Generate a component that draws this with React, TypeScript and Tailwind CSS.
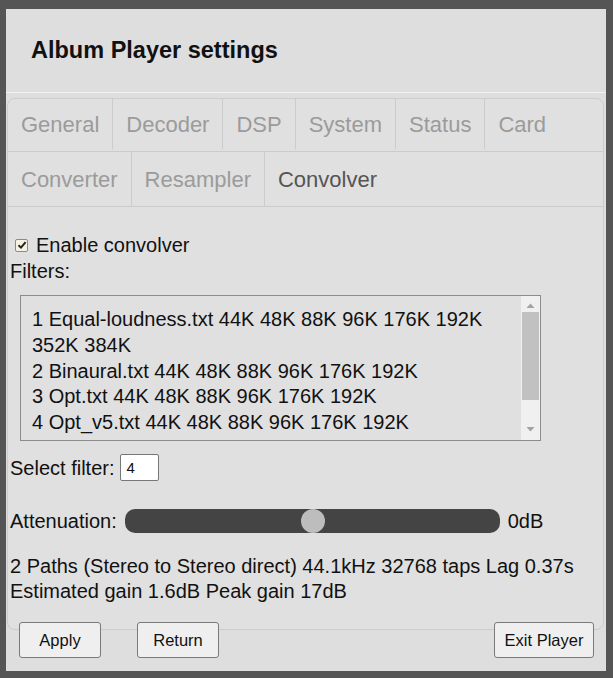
import React, { useState } from 'react'

const rowOne = ['General', 'Decoder', 'DSP', 'System', 'Status', 'Card']
const rowTwo = ['Converter', 'Resampler', 'Convolver']

const filters = [
    '1 Equal-loudness.txt 44K 48K 88K 96K 176K 192K 352K 384K',
    '2 Binaural.txt 44K 48K 88K 96K 176K 192K',
    '3 Opt.txt 44K 48K 88K 96K 176K 192K',
    '4 Opt_v5.txt 44K 48K 88K 96K 176K 192K',
]

const TabRow = ({ tabs, active, tall }: { tabs: string[]; active: string; tall?: boolean }) => (
    <div className={`flex border-b border-[#cbcbcb] ${tall ? 'h-[55px]' : 'h-[53px] pb-[2px]'}`}>
        {tabs.map((t, i) => (
            <div
                key={t}
                className={`flex items-center px-[13px] text-[22px] ${i < tabs.length - 1 ? 'border-r border-[#cbcbcb]' : ''} ${t === active ? 'text-[#555]' : 'text-[#9b9b9b]'}`}
            >
                {t}
            </div>
        ))}
    </div>
)

const Button = ({ label, className }: { label: string; className?: string }) => (
    <button className={`h-[36px] rounded-[3px] border border-[#7a7a7a] bg-[#efefef] text-[16.5px] text-[#111] ${className}`}>
        {label}
    </button>
)

export default function App() {
    const [enabled, setEnabled] = useState(true)
    const [filter, setFilter] = useState('4')

    return (
        <div className="min-h-screen bg-[#555555] pt-[9px] pl-[6px] pr-[7px] pb-[7px] font-['Liberation_Sans',Arial,sans-serif] text-[#111]">
            <div className="flex h-[662px] flex-col bg-[#dedede]">
                {/* Header */}
                <div className="flex h-[84px] items-center border-b border-[#f2f2f2] pl-[25px]">
                    <h1 className="text-[23.5px] font-bold text-[#111]">Album Player settings</h1>
                </div>

                {/* Tab card */}
                <div className="mt-[5px] ml-[1px] mr-[2px] rounded-[8px] border border-[#cccccc] bg-[#e0e0e0]">
                    <TabRow tabs={rowOne} active="Convolver" />
                    <TabRow tabs={rowTwo} active="Convolver" tall />

                    <div className="pt-[25px] pb-[25px] pl-[2px] text-[20px]">
                        <label className="flex h-[26px] items-center" onClick={() => setEnabled(!enabled)}>
                            <span className="ml-[5px] mr-[8px] flex h-[13px] w-[13px] items-center justify-center rounded-[2px] border border-[#8a8a8a] bg-[#f6f1e1]">
                                {enabled && (
                                    <svg width="10" height="10" viewBox="0 0 10 10">
                                        <path d="M1.5 5.2 L4 7.6 L8.6 2.2" fill="none" stroke="#222" strokeWidth="2" />
                                    </svg>
                                )}
                            </span>
                            Enable convolver
                        </label>
                        <div className="flex h-[26px] items-center">Filters:</div>

                        {/* Filter list */}
                        <div className="mt-[11px] ml-[10px] flex h-[146px] w-[521px] overflow-hidden border border-[#8c8c8c] bg-[#e0e0e0]">
                            <div className="flex-1 overflow-hidden pt-[11px] pl-[11px] pr-[8px] leading-[25.75px]">
                                {filters.map((f) => (
                                    <div key={f}>{f}</div>
                                ))}
                            </div>
                            <div className="flex w-[19px] flex-col items-center bg-[#f0f0f0]">
                                <svg width="9" height="16" viewBox="0 0 9 16" className="shrink-0">
                                    <path d="M0.5 12 L4.5 7.5 L8.5 12 Z" fill="#a3a3a3" />
                                </svg>
                                <div className="w-[17px] flex-1 pb-[22px]">
                                    <div className="h-full bg-[#c1c1c1]" />
                                </div>
                                <svg width="9" height="16" viewBox="0 0 9 16" className="mb-[2px] shrink-0">
                                    <path d="M0.5 5 L4.5 9.5 L8.5 5 Z" fill="#a3a3a3" />
                                </svg>
                            </div>
                        </div>

                        <div className="mt-[13px] flex h-[27px] items-center">
                            <span>Select filter:</span>
                            <input
                                value={filter}
                                onChange={(e) => setFilter(e.target.value)}
                                className="ml-[6px] h-[27px] w-[39px] rounded-[2px] border border-[#777] bg-white pl-[5px] text-[15px] text-[#111] outline-none"
                            />
                        </div>

                        <div className="mt-[28px] flex h-[24px] items-center">
                            <span>Attenuation:</span>
                            <div className="relative ml-[8px] h-[24px] w-[375px] rounded-[10px] bg-[#444444]">
                                <div className="absolute top-0 left-[176px] h-[24px] w-[24px] rounded-full bg-[#bdbdbd]" />
                            </div>
                            <span className="ml-[8px]">0dB</span>
                        </div>

                        <div className="mt-[21px] leading-[25px]">
                            <div>2 Paths (Stereo to Stereo direct) 44.1kHz 32768 taps Lag 0.37s</div>
                            <div>Estimated gain 1.6dB Peak gain 17dB</div>
                        </div>
                    </div>
                </div>

                {/* Footer buttons */}
                <div className="-mt-[8px] flex pl-[13px] pr-[12px]">
                    <Button label="Apply" className="w-[82px]" />
                    <Button label="Return" className="ml-[36px] w-[82px]" />
                    <Button label="Exit Player" className="ml-auto w-[100px]" />
                </div>
            </div>
        </div>
    )
}
